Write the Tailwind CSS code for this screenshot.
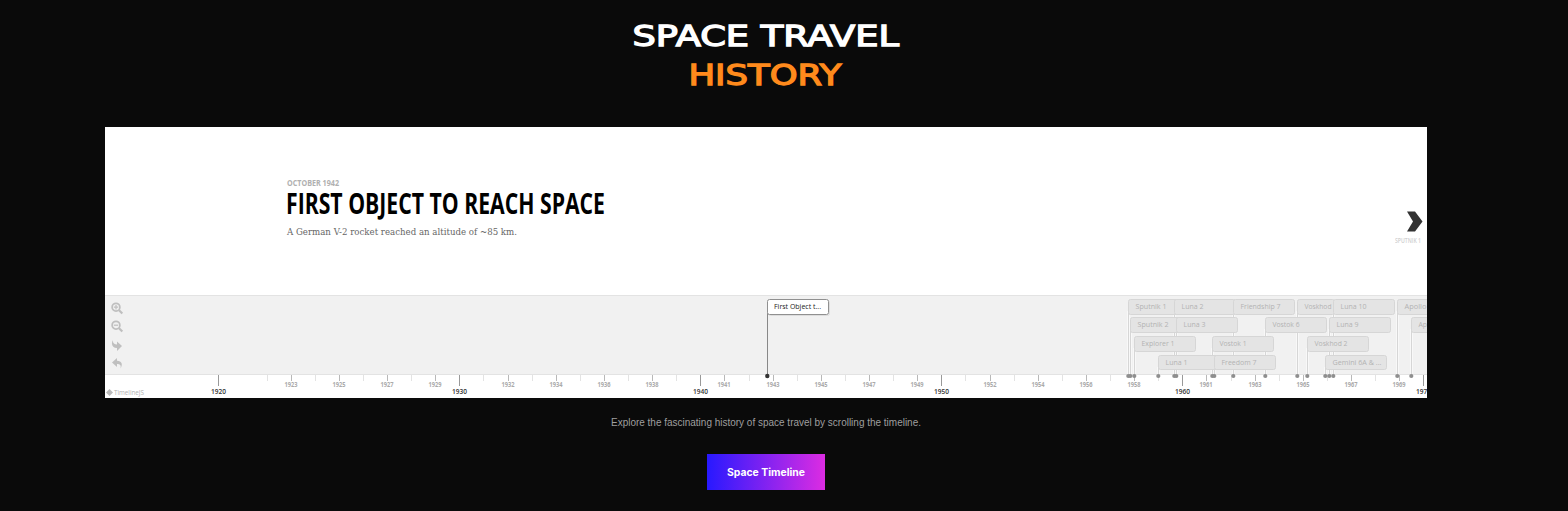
<!DOCTYPE html>
<html lang="en">
<head>
<meta charset="utf-8">
<title>Space Travel History</title>
<script src="https://cdn.jsdelivr.net/npm/@tailwindcss/browser@4"></script>
</head>
<body class="bg-[#0a0a0a] h-[511px] overflow-hidden font-['Liberation_Sans',sans-serif]">
<main class="flex flex-col w-[1322px] ml-[105px]">
  <h1 class="h-[127px] pt-4">
    <svg class="block mx-auto overflow-visible" width="266" height="80" font-family="DejaVu Sans, sans-serif" font-size="27.5" stroke-width="1.3">
      <text x="-0.5" y="29.500" fill="#fff" stroke="#fff" textLength="266.500" lengthAdjust="spacingAndGlyphs">SPACE TRAVEL</text>
      <text x="55.500" y="68.500" fill="#ff8a1c" stroke="#ff8a1c" textLength="153" lengthAdjust="spacingAndGlyphs">HISTORY</text>
    </svg>
  </h1>
  <section class="bg-white h-[271px] flex flex-col overflow-hidden">
    <div class="h-[168px] flex justify-between">
      <svg class="ml-[182px] mt-[48px] overflow-visible" width="330" height="70" font-family="Open Sans, sans-serif">
        <text x="0" y="11" font-size="9.5" font-weight="700" fill="#b0b0b0" textLength="52" lengthAdjust="spacingAndGlyphs">OCTOBER 1942</text>
        <text x="-1" y="39" font-size="29" font-weight="700" fill="#000" textLength="319" lengthAdjust="spacingAndGlyphs">FIRST OBJECT TO REACH SPACE</text>
        <text x="0" y="60" font-size="10" font-family="DejaVu Serif, serif" fill="#666" textLength="230" lengthAdjust="spacingAndGlyphs">A German V-2 rocket reached an altitude of ~85 km.</text>
      </svg>
      <svg class="mt-[84px] mr-[4px]" width="28" height="34" font-family="Open Sans, sans-serif">
        <path d="M12 .5h8L27.500 10.500 20 20.500h-8l6-10z" fill="#333"/>
        <text x="0" y="32" font-size="6.800" font-weight="600" fill="#d0d0d0" textLength="26" lengthAdjust="spacingAndGlyphs">SPUTNIK 1</text>
      </svg>
    </div>
    <div class="relative h-[103px]">
      <div class="h-[80px] bg-[#f1f1f1] border-y border-[#e3e3e3] flex flex-col pt-[6px] pl-[6px]">
        <svg width="14" height="70" fill="none" stroke="#bfbfbf">
          <g stroke-width="1.700"><circle cx="5" cy="5.200" r="3.900"/><path d="M8 8.200l3.300 3.300" stroke-width="2.200"/><path d="M2.800 5.200h4.400M5 3v4.400" stroke-width="1.200"/></g>
          <g stroke-width="1.700" transform="translate(0 18)"><circle cx="5" cy="5.200" r="3.900"/><path d="M8 8.200l3.300 3.300" stroke-width="2.200"/><path d="M2.800 5.200h4.400" stroke-width="1.200"/></g>
          <path d="M2 38C-.5 42 1.500 46 6 46V49L11 44 6 39.500V42.500C3 42.500 1.500 41 2 38z" fill="#bfbfbf" stroke="none"/>
          <path d="M9.500 66.500C12 62.500 11 59 6 58.800V56L1 60.500 6 65V62C9 62 10.300 63 9.500 66.500z" fill="#bfbfbf" stroke="none"/>
        </svg>
      </div>
      <svg id="nav" class="absolute inset-0 overflow-hidden" width="1322" height="103" font-family="Open Sans, sans-serif">
        <path d="M1 97.500L4.500 94l3.500 3.500L4.500 101z" fill="#bbb"/>
        <text x="9" y="99.500" font-size="6.500" fill="#b0b0b0" textLength="30" lengthAdjust="spacingAndGlyphs">TimelineJS</text>
      </svg>
    </div>
  </section>
  <p class="h-[56px] pt-[17px] flex justify-center">
    <svg class="overflow-visible" width="310" height="15" fill="#9f9f9f" font-size="10"><text y="11" textLength="310" lengthAdjust="spacingAndGlyphs">Explore the fascinating history of space travel by scrolling the timeline.</text></svg>
  </p>
  <a class="ml-[602px] w-[118px] h-[36px] flex items-center justify-center bg-linear-to-r/srgb from-[#2819ff] to-[#dc2ce2]">
    <svg class="overflow-visible" width="78" height="14" font-family="Inter, sans-serif" font-size="10.500" font-weight="700" fill="#fff"><text y="10.500" textLength="78" lengthAdjust="spacingAndGlyphs">Space Timeline</text></svg>
  </a>
</main>
<script>
const NS = 'http://www.w3.org/2000/svg', nav = document.getElementById('nav');
function add(tag, attrs, text) {
  const e = document.createElementNS(NS, tag);
  for (const k in attrs) e.setAttribute(k, attrs[k]);
  if (text) e.textContent = text;
  nav.appendChild(e);
}
function label(x, y, size, fill, width, text, weight) {
  add('text', {x, y, 'font-size': size, fill, textLength: width, lengthAdjust: 'spacingAndGlyphs', 'font-weight': weight || 400}, text);
}
const labelled = [3,5,7,9,12,14,16,18,21,23,25,27,29,32,34,36,38,41,43,45,47,49];
for (let n = 0; n <= 50; n++) {
  if (n === 1) continue;
  const major = n % 10 === 0, mid = labelled.includes(n);
  const x = major ? Math.floor(113.3 + 24.1 * n) : Math.round(113.3 + 24.1 * n);
  add('rect', {x, y: 80, width: 1, height: major ? 11 : 6, fill: major ? '#999' : mid ? '#b8b8b8' : '#e3e3e3'});
  if (major) label(x - 7, 99, 7.5, '#333', 15, String(1920 + n), 600);
  else if (mid) label(x - 6.5, 92, 6.5, '#aaa', 13, String(1920 + n), 700);
}
const rows = [4, 22, 41, 60];
const events = [
  [1023,0,'Sputnik 1',31],[1069,0,'Luna 2',22],[1128,0,'Friendship 7',40],[1192,0,'Voskhod',27],[1228,0,'Luna 10',26],[1292,0,'Apollo 8',28],
  [1025,1,'Sputnik 2',31],[1071,1,'Luna 3',22],[1160,1,'Vostok 6',27],[1224,1,'Luna 9',22],[1306,1,'Apollo 11',30],
  [1029,2,'Explorer 1',33],[1107,2,'Vostok 1',27],[1202,2,'Voskhod 2',33],
  [1053,3,'Luna 1',22],[1109,3,'Freedom 7',35],[1220,3,'Gemini 6A & ...',49]
];
events.forEach(([x, r]) => {
  add('rect', {x: x - 1, y: rows[r] + 12, width: 3, height: 67 - rows[r], fill: '#f8f8f8'});
  add('rect', {x, y: rows[r] + 12, width: 1, height: 67 - rows[r], fill: '#d6d6d6'});
});
events.forEach(([x, r, t, w]) => {
  const cut = t === 'Voskhod' ? 37 : 61;
  add('rect', {x: x + .5, y: rows[r] + .5, width: cut, height: r === 3 ? 14 : 15, rx: 2, fill: '#e4e4e4', stroke: '#d6d6d6'});
  label(x + 7.5, rows[r] + 10, 7.5, '#b3b3b3', w, t, 500);
});
events.forEach(([x]) => add('circle', {cx: x + .3, cy: 81, r: 2.1, fill: '#8e8e8e'}));
add('rect', {x: 662, y: 8, width: 1, height: 73, fill: '#888'});
add('rect', {x: 663.5, y: 5.5, width: 61, height: 15, rx: 2, fill: 'none', stroke: '#ddd'});
add('rect', {x: 662.5, y: 4.5, width: 61, height: 15, rx: 2, fill: '#fff', stroke: '#909090'});
label(669, 14, 7.5, '#222', 47, 'First Object t...', 500);
add('circle', {cx: 662.3, cy: 81, r: 2.2, fill: '#333'});
</script>
</body>
</html>
